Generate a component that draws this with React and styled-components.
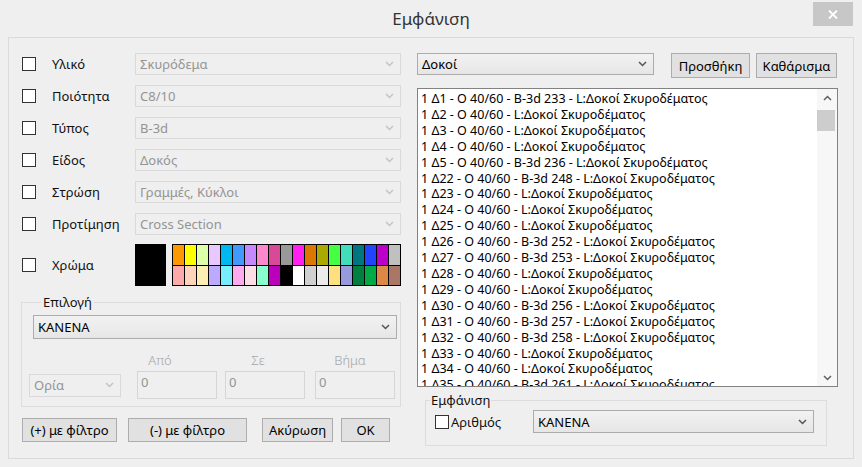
import React from 'react';
import styled, { createGlobalStyle } from 'styled-components';

const GlobalStyle = createGlobalStyle`
  html, body {
    margin: 0;
    padding: 0;
    background: #efefef;
  }
  body {
    font-family: "Noto Sans", "Open Sans", sans-serif;
    font-size: 12px;
    color: #000;
  }
  * {
    box-sizing: border-box;
  }
`;

const Window = styled.div`
  width: 862px;
  height: 467px;
  background: #efefef;
  display: flex;
  flex-direction: column;
  overflow: hidden;
`;

const TitleBar = styled.div`
  height: 37px;
  flex: none;
  display: grid;
  grid-template-columns: 1fr auto 1fr;
  align-items: start;
`;

const Title = styled.div`
  grid-column: 2;
  padding-top: 8px;
  font-size: 17px;
  line-height: 22px;
  color: #333;
`;

const CloseButton = styled.div`
  grid-column: 3;
  justify-self: end;
  width: 40px;
  height: 24px;
  margin: 2px 9px 0 0;
  background: #c7c7c7;
  display: flex;
  align-items: center;
  justify-content: center;
`;

const Client = styled.div`
  flex: 1;
  margin: 0 8px 8px 8px;
  border: 1px solid #dadada;
  padding: 15px 0 0 13px;
  display: grid;
  grid-template-columns: 379px 421px;
  column-gap: 16px;
  align-items: start;
`;

const LeftColumn = styled.div`
  display: flex;
  flex-direction: column;
`;

const RightColumn = styled.div`
  display: flex;
  flex-direction: column;
`;

const FieldRow = styled.div`
  display: grid;
  grid-template-columns: 30px 83px 266px;
  align-items: center;
  height: ${(p) => p.$h || 22}px;
  margin-bottom: ${(p) => (p.$last ? 0 : 10)}px;
  margin-top: ${(p) => p.$mt || 0}px;
`;

const Check = styled.span`
  display: inline-block;
  width: 14px;
  height: 14px;
  border: 1px solid #333;
  background: #fff;
  flex: none;
`;

const Label = styled.span`
  font-size: 13px;
  line-height: 16px;
  color: #111;
  white-space: nowrap;
`;

const ComboBox = styled.div`
  display: flex;
  align-items: center;
  justify-content: space-between;
  width: ${(p) => (p.$w ? `${p.$w}px` : '100%')};
  height: ${(p) => p.$h || 22}px;
  margin-left: ${(p) => p.$ml || 0}px;
  padding: 0 6px 0 4px;
  border: 1px solid ${(p) => (p.$disabled ? '#d9d9d9' : '#acacac')};
  background: ${(p) =>
    p.$disabled ? '#efefef' : 'linear-gradient(#f2f2f2, #e6e6e6)'};
  color: ${(p) => (p.$disabled ? '#949494' : '#000')};
  font-size: 13px;
  white-space: nowrap;
  overflow: hidden;
`;

const ColorCell = styled.div`
  display: flex;
  gap: 6px;
`;

const BlackSwatch = styled.div`
  width: 32px;
  height: 42px;
  background: #000;
`;

const Palette = styled.div`
  display: grid;
  grid-template-columns: repeat(19, 11px);
  grid-template-rows: repeat(2, 19.5px);
  gap: 1px;
  padding: 1px;
  background: #000;
`;

const Swatch = styled.div`
  background: ${(p) => p.$c};
`;

const GroupBox = styled.fieldset`
  margin: ${(p) => p.$margin};
  width: ${(p) => p.$w}px;
  border: 1px solid #dcdcdc;
  padding: ${(p) => p.$pad};
  min-inline-size: 0;
`;

const Legend = styled.legend`
  padding: 0 ${(p) => p.$px || 2}px;
  margin-left: ${(p) => p.$ml || 0}px;
  font-size: 13px;
  line-height: 16px;
  color: #111;
`;

const RangeGrid = styled.div`
  display: grid;
  grid-template-columns: 108px 88px 90px 80px;
  grid-template-rows: 16px 28px;
  row-gap: 3px;
  margin-top: 13px;
  align-items: center;
`;

const RangeLabel = styled.span`
  grid-row: 1;
  grid-column: ${(p) => p.$col};
  width: 80px;
  padding-right: ${(p) => p.$shift}px;
  text-align: center;
  font-size: 13px;
  line-height: 16px;
  font-weight: 300;
  color: #a5a5a5;
`;

const RangeSelect = styled.div`
  grid-row: 2;
  grid-column: 1;
`;

const NumberField = styled.div`
  grid-row: 2;
  grid-column: ${(p) => p.$col};
  width: 80px;
  height: 28px;
  border: 1px solid #d6d6d6;
  background: #efefef;
  color: #949494;
  font-size: 13px;
  line-height: 16px;
  padding: 2px 3px;
`;

const ButtonRow = styled.div`
  display: flex;
  margin-top: 11px;
`;

const Button = styled.div`
  width: ${(p) => p.$w}px;
  height: ${(p) => p.$h || 24}px;
  margin-left: ${(p) => p.$ml || 0}px;
  border: 1px solid #adadad;
  background: #e1e1e1;
  display: flex;
  align-items: center;
  justify-content: center;
  font-size: 13px;
  color: #000;
  white-space: nowrap;
`;

const TopRow = styled.div`
  display: flex;
  align-items: flex-start;
`;

const ListBox = styled.div`
  margin-top: 10px;
  height: 299px;
  border: 1px solid #828282;
  background: #fff;
  display: flex;
`;

const ListItems = styled.div`
  flex: 1;
  overflow: hidden;
  padding: 2px 0 0 3px;
`;

const ListItem = styled.div`
  font-size: 12.5px;
  line-height: 15.9px;
  white-space: nowrap;
  color: #000;
`;

const ScrollBar = styled.div`
  width: 20px;
  display: flex;
  flex-direction: column;
  background: #f7f7f7;
`;

const ScrollArrow = styled.div`
  height: 17px;
  display: flex;
  align-items: center;
  justify-content: center;
`;

const ScrollTrack = styled.div`
  flex: 1;
  padding: 4px 2px 0 0;
`;

const ScrollThumb = styled.div`
  height: 21px;
  background: #cdcdcd;
`;

const ShowRow = styled.div`
  display: grid;
  grid-template-columns: 98px 281px;
  align-items: center;
  padding-left: 9px;
  margin-top: 2px;
`;

const CheckLabel = styled.label`
  display: flex;
  align-items: center;
  gap: 2px;
`;

const Chevron = ({ color = '#555', up = false }) => (
  <svg width="9" height="6" viewBox="0 0 9 6">
    <polyline
      points={up ? '1,5 4.5,1.5 8,5' : '1,1 4.5,4.5 8,1'}
      fill="none"
      stroke={color}
      strokeWidth="1.5"
    />
  </svg>
);

const Combo = ({ children, disabled, ...rest }) => (
  <ComboBox $disabled={disabled} {...rest}>
    <span>{children}</span>
    <Chevron color={disabled ? '#c4c4c4' : '#555'} />
  </ComboBox>
);

const fields = [
  ['Υλικό', 'Σκυρόδεμα'],
  ['Ποιότητα', 'C8/10'],
  ['Τύπος', 'B-3d'],
  ['Είδος', 'Δοκός'],
  ['Στρώση', 'Γραμμές, Κύκλοι'],
  ['Προτίμηση', 'Cross Section'],
];

const paletteTop = [
  '#ff9900', '#ffff00', '#dcffa8', '#e8c8ff', '#00b8f0', '#4499ff', '#c488ff',
  '#ff88cc', '#d84a98', '#999999', '#ff22ee', '#dd7700', '#aaaa00', '#44ff44',
  '#44ddbb', '#007780', '#2244ff', '#bb00cc', '#c0c0c0',
];

const paletteBottom = [
  '#ffaaaa', '#ffd4bb', '#ffeeb4', '#bbaaff', '#77eeff', '#ffaaee', '#ffdde6',
  '#88ffcc', '#bb00bb', '#000000', '#ffffff', '#d0d0d0', '#ebebeb', '#ffe080',
  '#9999dd', '#008040', '#00aa44', '#dd8844', '#aa7766',
];

const beams = [
  ['1', '233'], ['2'], ['3'], ['4'], ['5', '236'], ['22', '248'], ['23'],
  ['24'], ['25'], ['26', '252'], ['27', '253'], ['28'], ['29'],
  ['30', '256'], ['31', '257'], ['32', '258'], ['33'], ['34'], ['35', '261'],
];

export default function App() {
  return (
    <>
      <GlobalStyle />
      <Window>
        <TitleBar>
          <Title>Εμφάνιση</Title>
          <CloseButton>
            <svg width="10" height="9" viewBox="0 0 10 9">
              <path d="M1 0.5 L9 8.5 M9 0.5 L1 8.5" stroke="#fff" strokeWidth="1.8" />
            </svg>
          </CloseButton>
        </TitleBar>
        <Client>
          <LeftColumn>
            {fields.map(([label, value], i) => (
              <FieldRow key={label} $last={i === fields.length - 1}>
                <Check />
                <Label>{label}</Label>
                <Combo disabled>{value}</Combo>
              </FieldRow>
            ))}
            <FieldRow $h={42} $mt={9} $last>
              <Check />
              <Label>Χρώμα</Label>
              <ColorCell>
                <BlackSwatch />
                <Palette>
                  {[...paletteTop, ...paletteBottom].map((c, i) => (
                    <Swatch key={i} $c={c} />
                  ))}
                </Palette>
              </ColorCell>
            </FieldRow>

            <GroupBox $margin="8px 0 0 -1px" $w={380} $pad="5px 5px 7px 7px">
              <Legend $ml={12}>Επιλογή</Legend>
              <Combo $w={364} $h={24} $ml={4}>
                ΚΑΝΕΝΑ
              </Combo>
              <RangeGrid>
                <RangeLabel $col={2} $shift={34}>Από</RangeLabel>
                <RangeLabel $col={3} $shift={14}>Σε</RangeLabel>
                <RangeLabel $col={4} $shift={10}>Βήμα</RangeLabel>
                <RangeSelect>
                  <Combo disabled $w={92} $h={23}>
                    Ορία
                  </Combo>
                </RangeSelect>
                <NumberField $col={2}>0</NumberField>
                <NumberField $col={3}>0</NumberField>
                <NumberField $col={4}>0</NumberField>
              </RangeGrid>
            </GroupBox>

            <ButtonRow>
              <Button $w={95}>(+) με φίλτρο</Button>
              <Button $w={119} $ml={11}>(-) με φίλτρο</Button>
              <Button $w={71} $ml={15}>Ακύρωση</Button>
              <Button $w={49} $ml={8}>OK</Button>
            </ButtonRow>
          </LeftColumn>

          <RightColumn>
            <TopRow>
              <Combo $w={237}>Δοκοί</Combo>
              <Button $w={79} $h={25} $ml={17}>Προσθήκη</Button>
              <Button $w={81} $h={25} $ml={6}>Καθάρισμα</Button>
            </TopRow>
            <ListBox>
              <ListItems>
                {beams.map(([n, b]) => (
                  <ListItem key={n}>
                    {`1 Δ${n} - O 40/60 - ${b ? `B-3d ${b} - ` : ''}L:Δοκοί Σκυροδέματος`}
                  </ListItem>
                ))}
              </ListItems>
              <ScrollBar>
                <ScrollArrow>
                  <Chevron color="#606060" up />
                </ScrollArrow>
                <ScrollTrack>
                  <ScrollThumb />
                </ScrollTrack>
                <ScrollArrow>
                  <Chevron color="#606060" />
                </ScrollArrow>
              </ScrollBar>
            </ListBox>
            <GroupBox $margin="5px 0 0 8px" $w={402} $pad="0 0 12px 0">
              <Legend $px={1} $ml={4}>Εμφάνιση</Legend>
              <ShowRow>
                <CheckLabel>
                  <Check />
                  <Label>Αριθμός</Label>
                </CheckLabel>
                <Combo $w={281} $h={23}>
                  ΚΑΝΕΝΑ
                </Combo>
              </ShowRow>
            </GroupBox>
          </RightColumn>
        </Client>
      </Window>
    </>
  );
}
